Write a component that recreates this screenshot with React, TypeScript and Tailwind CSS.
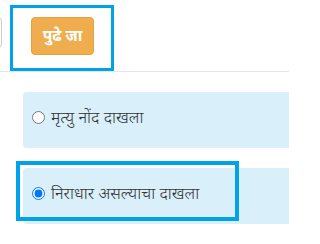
import { useState } from 'react'

const options = [
  { id: 'death', label: 'मृत्यु नोंद दाखला' },
  { id: 'destitute', label: 'निराधार असल्याचा दाखला' },
]

export default function App() {
  const [selected, setSelected] = useState('destitute')

  return (
    <div className="relative w-[289px] h-[244px] overflow-hidden bg-white font-['Noto_Sans',sans-serif] text-[#333]">
      {/* Action bar */}
      <div className="flex items-start h-[72px] border-b border-[#e5e5e5] pt-[17px]">
        <button className="-ml-[60px] w-[62px] h-[31px] shrink-0 rounded border border-[#ccc] bg-white" />
        <button className="ml-[29px] w-[63px] h-[38px] shrink-0 rounded border border-[#eea236] bg-[#f0ad4e] text-white text-[15.5px] font-bold leading-none">
          पुढे जा
        </button>
      </div>

      {/* Options */}
      <div className="flex flex-col gap-[20px] pt-[20px] pl-[23px]">
        {options.map((opt) => (
          <label
            key={opt.id}
            className="flex items-center gap-[6px] h-[56px] w-[300px] pl-[9px] pb-[6px] rounded bg-[#d9effa] text-[16.5px] font-light cursor-pointer"
          >
            <input
              type="radio"
              name="certificate"
              className="m-0 w-[13px] h-[13px] shrink-0"
              checked={selected === opt.id}
              onChange={() => setSelected(opt.id)}
            />
            <span>{opt.label}</span>
          </label>
        ))}
      </div>

      {/* Highlight boxes */}
      <div className="absolute left-[10px] top-[5px] w-[104px] h-[66px] border-[3px] border-[#00a2e8] pointer-events-none" />
      <div className="absolute left-[16px] top-[161px] w-[223px] h-[60px] border-[4px] border-[#00a2e8] pointer-events-none" />
    </div>
  )
}
